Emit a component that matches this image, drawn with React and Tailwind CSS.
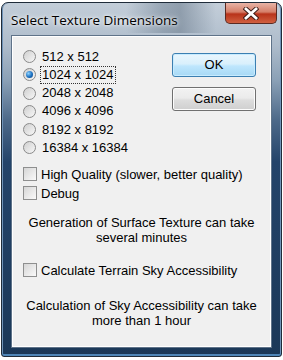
import React from "react";

function Radio({ checked }) {
  return (
    <span className="relative inline-flex w-[13px] h-[13px] rounded-full border border-[#8a8a8a] bg-[linear-gradient(135deg,#cfcfcf,#f7f7f7)] items-center justify-center shrink-0">
      {checked && (
        <span className="w-[7px] h-[7px] rounded-full bg-[radial-gradient(circle_at_35%_35%,#8fd3ff,#1a6fc0_55%,#0b3f7a)]" />
      )}
    </span>
  );
}

function Check() {
  return (
    <span className="inline-block w-[14px] h-[14px] border border-[#8e8f8f] bg-[linear-gradient(135deg,#d6d6d6,#fafafa)] shrink-0" />
  );
}

export default function App() {
  const sizes = ["512 x 512", "1024 x 1024", "2048 x 2048", "4096 x 4096", "8192 x 8192", "16384 x 16384"];
  return (
    <div className="w-[283px] h-[360px] bg-white pt-[2px] pl-[1px] pr-[1px] pb-[3px] font-['Liberation_Sans',sans-serif] text-[13px] text-black">
      <div className="h-full rounded-t-[7px] rounded-b-[3px] border border-[#1f2c3a] bg-[linear-gradient(180deg,#c3ced9_0%,#aebccb_12%,#8aa0b6_22%,#4e6a8a_33%,#24446a_45%,#1b3858_100%)] shadow-[inset_0_-2px_0_#4f86b8,inset_1px_0_0_#6f93b8,inset_-1px_0_0_#6f93b8] flex flex-col px-[9px] pb-[8px]">
        <div className="h-[30px] flex items-start relative">
          <div className="absolute left-[115px] w-[90px] top-0 h-[30px] bg-[linear-gradient(90deg,transparent,#7d8d9e_40%,#6f7f90_60%,transparent)] opacity-60" />
          <span className="relative mt-[7px] text-[13.5px] font-['Open_Sans',sans-serif] text-black [text-shadow:0_0_6px_#ffffff,0_0_3px_#ffffff]">Select Texture Dimensions</span>
          <div className="ml-auto mr-[-5px] relative w-[52px] h-[21px] rounded-b-[5px] border border-[#5a2a22] border-t-0 bg-[linear-gradient(180deg,#e8b4a6_0%,#d57f69_45%,#b8331a_55%,#d06040_100%)] flex items-center justify-center">
            <svg width="16" height="13" viewBox="0 0 16 13">
              <path d="M3 2 L13 11 M13 2 L3 11" stroke="#3a1a14" strokeWidth="4.6" strokeLinecap="square" />
              <path d="M3 2 L13 11 M13 2 L3 11" stroke="#ffffff" strokeWidth="2.8" strokeLinecap="square" />
            </svg>
          </div>
        </div>
        <div className="flex-1 border border-[#5f7389] bg-[#f0f0f0] shadow-[inset_0_0_0_1px_#ffffff] mt-[2px] flex flex-col px-[11px]">
          <div className="flex mt-[14px]">
            <div className="flex flex-col gap-[5.3px]">
              {sizes.map((s, i) => (
                <div key={s} className="flex items-center h-[13px] gap-[5px]">
                  <Radio checked={i === 1} />
                  <span className={"px-[1px] leading-[16px] " + (i === 1 ? "outline outline-1 outline-dotted outline-[#333]" : "")}>{s}</span>
                </div>
              ))}
            </div>
            <div className="ml-auto mr-[4px] flex flex-col gap-[10px] mt-[3px]">
              <button className="w-[84px] h-[24px] rounded-[3px] border border-[#3c7fb1] bg-[linear-gradient(180deg,#eaf6fd_0%,#d9f0fc_45%,#bee6fd_55%,#a7d9f5_100%)] shadow-[inset_0_0_0_1px_#c8ecff]">OK</button>
              <button className="w-[84px] h-[24px] rounded-[3px] border border-[#707070] bg-[linear-gradient(180deg,#f2f2f2_0%,#ebebeb_45%,#dddddd_55%,#cfcfcf_100%)] shadow-[inset_0_0_0_1px_#fcfcfc]">Cancel</button>
            </div>
          </div>
          <div className="mt-[13px] flex flex-col gap-[5px]">
            <div className="flex items-center gap-[4px] h-[14px]"><Check /><span>High Quality (slower, better quality)</span></div>
            <div className="flex items-center gap-[4px] h-[14px]"><Check /><span>Debug</span></div>
          </div>
          <p className="mt-[15px] text-center leading-[15px]">Generation of Surface Texture can take<br />several minutes</p>
          <div className="mt-[18px] flex items-center gap-[4px] h-[14px]"><Check /><span>Calculate Terrain Sky Accessibility</span></div>
          <p className="mt-[21px] text-center leading-[15px]">Calculation of Sky Accessibility can take<br />more than 1 hour</p>
        </div>
      </div>
    </div>
  );
}
